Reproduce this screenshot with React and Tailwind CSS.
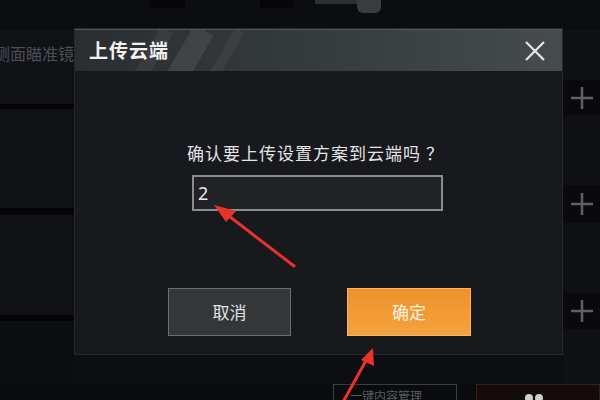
import React from "react";

function Plus() {
  return (
    <svg width="26" height="26" viewBox="0 0 26 26" className="text-[#5d6064]">
      <path d="M13 2 V24 M2 13 H24" stroke="currentColor" strokeWidth="2.5" />
    </svg>
  );
}

export default function App() {
  const font = { fontFamily: '"Noto Sans CJK SC", "Noto Sans", sans-serif' };
  return (
    <div className="relative w-[600px] h-[400px] overflow-hidden bg-[#0d0e11]" style={font}>
      {/* background page */}
      <div className="flex flex-col h-full">
        <div className="h-[30px] flex items-start bg-[#0c0d10]">
          <div className="ml-[150px] w-[35px] h-[8px] bg-[#060607]" />
          <div className="ml-[75px] w-[33px] h-[8px] bg-[#060607]" />
          <div className="ml-[22px] w-[42px] h-[4px] bg-[#2e2f31]" />
          <div className="w-[24px] h-[13px] rounded-b-[6px] bg-[#3a3b3d]" />
        </div>
        <div className="flex flex-1">
          <div className="w-[74px] flex flex-col">
            <div className="h-[74px] bg-[#111216] flex items-center">
              <span className="text-[16px] text-[#4c4f55] whitespace-nowrap -ml-[6px] -mt-[28px]">侧面瞄准镜</span>
            </div>
            <div className="h-[5px] bg-[#050506]" />
            <div className="h-[99px] bg-[#111216]" />
            <div className="h-[7px] bg-[#050506]" />
            <div className="h-[100px] bg-[#111216]" />
            <div className="h-[6px] bg-[#050506]" />
            <div className="flex-1 bg-[#0c0d10]" />
          </div>
          <div className="flex-1" />
          <div className="w-[37px] flex flex-col bg-[#101114]">
            <div className="h-[50px]" />
            <div className="h-[35px] bg-[#0a0a0c] flex items-center justify-center"><Plus /></div>
            <div className="h-[70px]" />
            <div className="h-[38px] bg-[#0a0a0c] flex items-center justify-center"><Plus /></div>
            <div className="h-[70px]" />
            <div className="h-[36px] bg-[#0a0a0c] flex items-center justify-center"><Plus /></div>
            <div className="flex-1" />
          </div>
        </div>
        <div className="h-[16px] flex items-start bg-[#0a0b0d]">
          <div className="ml-[333px] w-[124px] h-[20px] border border-[#3b3d41] text-[12px] text-[#5a5d62] pl-[16px] leading-[22px] overflow-hidden whitespace-nowrap">一键内容管理</div>
          <div className="ml-[19px] flex-1 h-[20px] border border-[#3a1c1c] bg-[#140c0c] flex items-center pl-[48px] gap-[2px]">
            <span className="w-[8px] h-[8px] rounded-full bg-[#cfcfcf] mt-[8px]" />
            <span className="w-[8px] h-[8px] rounded-full bg-[#cfcfcf] mt-[8px]" />
          </div>
        </div>
      </div>

      {/* dialog */}
      <div className="absolute left-[74px] top-[28px] w-[489px] h-[327px] bg-[#17191d] border border-[#25282c] flex flex-col">
        <div className="relative h-[42px] flex items-center justify-between px-[14px] overflow-hidden border-t border-[#52575a] bg-gradient-to-r from-[#2a2e31] via-[#363b3e] to-[#464b4e]">
          <div className="absolute left-[85px] top-0 w-[14px] h-[60px] bg-[#ffffff0e] rotate-[30deg] origin-top" />
          <div className="absolute left-[118px] top-0 w-[22px] h-[60px] bg-[#ffffff14] rotate-[30deg] origin-top" />
          <div className="absolute left-[160px] top-0 w-[10px] h-[60px] bg-[#ffffff0c] rotate-[30deg] origin-top" />
          <span className="relative text-[19px] font-bold text-[#f2f2f2] tracking-[1px]">上传云端</span>
          <svg width="22" height="22" viewBox="0 0 22 22" className="relative mr-[2px]">
            <path d="M2 2 L20 20 M20 2 L2 20" stroke="#e6e6e6" strokeWidth="2.2" />
          </svg>
        </div>
        <div className="flex flex-col items-center">
          <div className="mt-[70px] text-[17px] leading-[24px] text-[#e4e4e4] tracking-[1px] -ml-[6px]">确认要上传设置方案到云端吗 ？</div>
          <div className="mt-[10px] w-[251px] h-[36px] border-2 border-[#8b8c8e] bg-[#212225] flex items-center px-[4px] -ml-[2px]">
            <span className="text-[18px] text-[#ececec]" style={{ fontFamily: '"Noto Sans", sans-serif' }}>2</span>
          </div>
          <div className="mt-[77px] flex gap-[56px] ml-[2px]">
            <div className="w-[123px] h-[48px] bg-[#33373a] border border-[#6a6e71] flex items-center justify-center text-[17px] text-[#e2e2e2]">取消</div>
            <div className="w-[124px] h-[48px] bg-gradient-to-b from-[#ef912a] to-[#f4a23e] border border-[#f7b563] flex items-center justify-center text-[17px] text-[#fff4e6]">确定</div>
          </div>
        </div>
      </div>

      {/* red arrows */}
      <svg className="absolute left-0 top-0" width="600" height="400" viewBox="0 0 600 400">
        <path d="M294 266 L225 213" stroke="#e8332b" strokeWidth="3" strokeLinecap="round" />
        <path d="M214 205 L236 211 L226 222 Z" fill="#e8332b" />
        <path d="M343 402 L368 357" stroke="#e8332b" strokeWidth="3" strokeLinecap="round" />
        <path d="M373 348 L374 366 L361 360 Z" fill="#e8332b" />
      </svg>
    </div>
  );
}
